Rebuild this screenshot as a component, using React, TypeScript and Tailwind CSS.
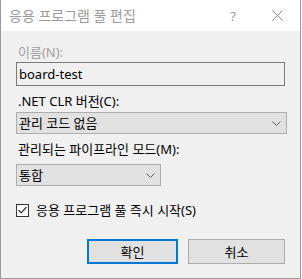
import React from 'react';

const font = { fontFamily: '"Noto Sans", "Noto Sans CJK KR", sans-serif' };

function Chevron() {
  return (
    <svg width="9" height="5" viewBox="0 0 9 5" className="shrink-0">
      <path d="M0.5 0.5 L4.5 4.5 L8.5 0.5" fill="none" stroke="#606060" strokeWidth="1" />
    </svg>
  );
}

function Select({ value, width }: { value: string; width: string }) {
  return (
    <div className={`flex h-[22px] ${width} items-center justify-between border border-[#adadad] bg-[#e1e1e1] pl-[2px] pr-[5px] text-black`}>
      <span>{value}</span>
      <Chevron />
    </div>
  );
}

export default function App() {
  return (
    <div style={font} className="flex h-[279px] w-[301px] flex-col border-x border-b border-[#9a9a9a] bg-[#f0f0f0] text-[13px] leading-[16px]">
      {/* title bar */}
      <div className="flex h-[31px] shrink-0 items-center bg-white pl-[8px] text-[#9b9b9b]">
        <span className="text-[14px]">응용 프로그램 풀 편집</span>
        <span className="ml-auto mr-[36px] text-[13px]">?</span>
        <svg width="11" height="11" viewBox="0 0 11 11" className="mr-[17px]">
          <path d="M0.5 0.5 L10.5 10.5 M10.5 0.5 L0.5 10.5" stroke="#8a8a8a" strokeWidth="1" />
        </svg>
      </div>

      {/* body */}
      <div className="flex flex-col px-[15px] pt-[13px]">
        <label className="h-[16px] pl-[2px] text-[#a0a0a0]">이름(N):</label>
        <div className="mt-[2px] flex h-[24px] items-center border border-[#7a7a7a] bg-[#f0f0f0] pl-[2px] text-black">
          board-test
        </div>

        <label className="mt-[7px] h-[16px] pl-[2px] text-black">.NET CLR 버전(C):</label>
        <div className="mt-[3px]">
          <Select value="관리 코드 없음" width="w-[271px]" />
        </div>

        <label className="mt-[7px] h-[16px] pl-[2px] text-black">관리되는 파이프라인 모드(M):</label>
        <div className="mt-[7px]">
          <Select value="통합" width="w-[145px]" />
        </div>

        <div className="mt-[16px] flex h-[16px] items-center">
          <div className="flex h-[13px] w-[13px] items-center justify-center border border-[#333333] bg-white">
            <svg width="9" height="8" viewBox="0 0 9 8">
              <path d="M0.5 4 L3.2 6.8 L8.5 1" fill="none" stroke="#333333" strokeWidth="1.2" />
            </svg>
          </div>
          <span className="ml-[7px] text-black">응용 프로그램 풀 즉시 시작(S)</span>
        </div>

        <div className="mt-[21px] flex justify-end gap-[10px]">
          <button className="flex h-[25px] w-[91px] items-center justify-center border-2 border-[#0078d7] bg-[#e1e1e1] text-black">
            확인
          </button>
          <button className="flex h-[25px] w-[97px] items-center justify-center border border-[#adadad] bg-[#e1e1e1] text-black">
            취소
          </button>
        </div>
      </div>
    </div>
  );
}
